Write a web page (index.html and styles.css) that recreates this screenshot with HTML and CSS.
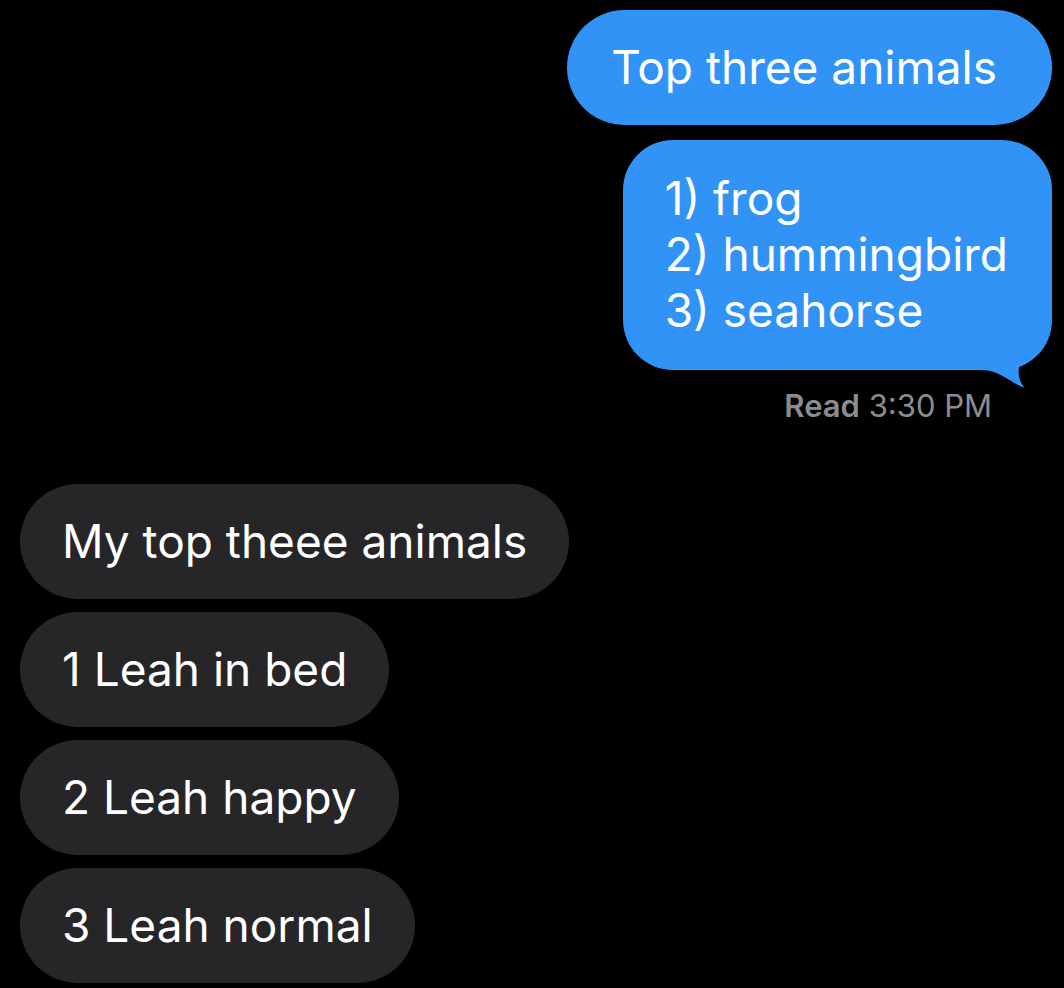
FILE: index.html
```html
<!DOCTYPE html>
<html lang="en">
<head>
<meta charset="utf-8">
<title>Messages</title>
<link rel="stylesheet" href="styles.css">
</head>
<body>
<main class="thread">
  <section class="group sent">
    <div class="bubble blue first">Top three animals</div>
    <div class="bubble blue list">
      <span>1) frog</span>
      <span>2) hummingbird</span>
      <span>3) seahorse</span>
      <svg class="tail" viewBox="0 0 70 70" width="70" height="70" aria-hidden="true">
        <path d="M0 0 L67 0 L67 2 C64 18 50 30 42 37 C37 42 36 50 37 56 C38 62 41 66 43 68 C30 64 18 50 0 50 Z" fill="#3193f6"/>
      </svg>
    </div>
    <div class="receipt"><b>Read</b> 3:30 PM</div>
  </section>
  <section class="group received">
    <div class="bubble grey">My top theee animals</div>
    <div class="bubble grey">1 Leah in bed</div>
    <div class="bubble grey">2 Leah happy</div>
    <div class="bubble grey">3 Leah normal</div>
  </section>
</main>
</body>
</html>
```
FILE: styles.css
```css
html, body {
  margin: 0;
  padding: 0;
  background: #000;
}
body {
  width: 1064px;
  height: 988px;
  overflow: hidden;
  font-family: Inter, "Liberation Sans", Arial, sans-serif;
  color: #fff;
}
.thread {
  display: flex;
  flex-direction: column;
}
.group {
  display: flex;
  flex-direction: column;
}
.sent {
  align-items: flex-end;
  padding: 10px 12px 0 0;
}
.received {
  align-items: flex-start;
  padding: 60px 0 0 20px;
  gap: 13px;
}
.bubble {
  font-size: 46px;
  line-height: 56px;
  box-sizing: border-box;
  white-space: nowrap;
}
.blue {
  background: #3193f6;
}
.first {
  height: 115px;
  border-radius: 58px;
  padding: 29px 55px 0 44px;
}
.list {
  position: relative;
  margin-top: 15px;
  border-radius: 50px;
  padding: 30px 44px 32px 42px;
  display: flex;
  flex-direction: column;
  height: 230px;
}
.tail {
  position: absolute;
  right: 0;
  bottom: -20px;
  display: block;
}
.receipt {
  margin-top: 18px;
  margin-right: 60px;
  font-size: 31px;
  line-height: 36px;
  color: #8c8c90;
}
.receipt b {
  font-weight: 600;
}
.grey {
  background: #262629;
  height: 115px;
  border-radius: 58px;
  padding: 29px 42px 0 42px;
}
```
